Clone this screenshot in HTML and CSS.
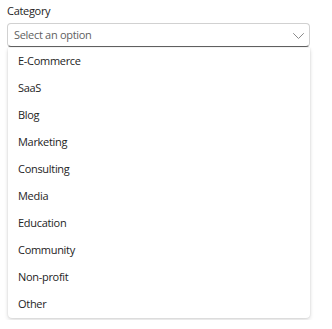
FILE: index.html
```html
<!DOCTYPE html>
<html lang="en">
<head>
    <meta charset="UTF-8">
    <meta name="viewport" content="width=device-width, initial-scale=1.0">
    <title>Category</title>
    <link rel="stylesheet" href="styles.css">
</head>
<body>
    <div class="field">
        <label class="field-label" for="category">Category</label>
        <div class="dropdown">
            <div class="dropdown-button" id="category">
                <span class="placeholder">Select an option</span>
                <svg class="chevron" width="11" height="6" viewBox="0 0 11 6">
                    <path d="M0.5 0.5 L5.5 5.5 L10.5 0.5" fill="none" stroke="#8a8a8a" stroke-width="1" stroke-linecap="round" stroke-linejoin="round"/>
                </svg>
            </div>
            <div class="listbox">
                <div class="option">E-Commerce</div>
                <div class="option">SaaS</div>
                <div class="option">Blog</div>
                <div class="option">Marketing</div>
                <div class="option">Consulting</div>
                <div class="option">Media</div>
                <div class="option">Education</div>
                <div class="option">Community</div>
                <div class="option">Non-profit</div>
                <div class="option">Other</div>
            </div>
        </div>
    </div>
</body>
</html>
```

FILE: styles.css
```css
body {
    font-family: 'Open Sans', 'Noto Sans', sans-serif;
    font-size: 11px;
    letter-spacing: -0.3px;
    color: #242424;
    background-color: #fff;
    margin: 0;
    padding: 2px 7px;
}
.field {
    width: 303px;
    display: flex;
    flex-direction: column;
    gap: 4px;
}
.field-label {
    line-height: 17px;
    color: #242424;
}
.dropdown {
    display: flex;
    flex-direction: column;
    gap: 1px;
}
.dropdown-button {
    height: 24px;
    display: flex;
    align-items: center;
    justify-content: space-between;
    padding: 0 6px 2px;
    background: #fff;
    border: 1px solid #d1d1d1;
    border-bottom-color: #616161;
    border-radius: 4px;
    box-sizing: border-box;
}
.placeholder {
    color: #616161;
}
.chevron {
    margin-right: -1px;
    margin-top: 3px;
}
.listbox {
    margin-left: 1px;
    background: #fff;
    border-radius: 0 0 4px 4px;
    box-shadow: 0 0 2px rgba(0, 0, 0, 0.12), 0 2px 4px rgba(0, 0, 0, 0.14);
}
.option {
    height: 27px;
    line-height: 25px;
    padding: 0 10px 2px;
    box-sizing: border-box;
    color: #242424;
}
```
